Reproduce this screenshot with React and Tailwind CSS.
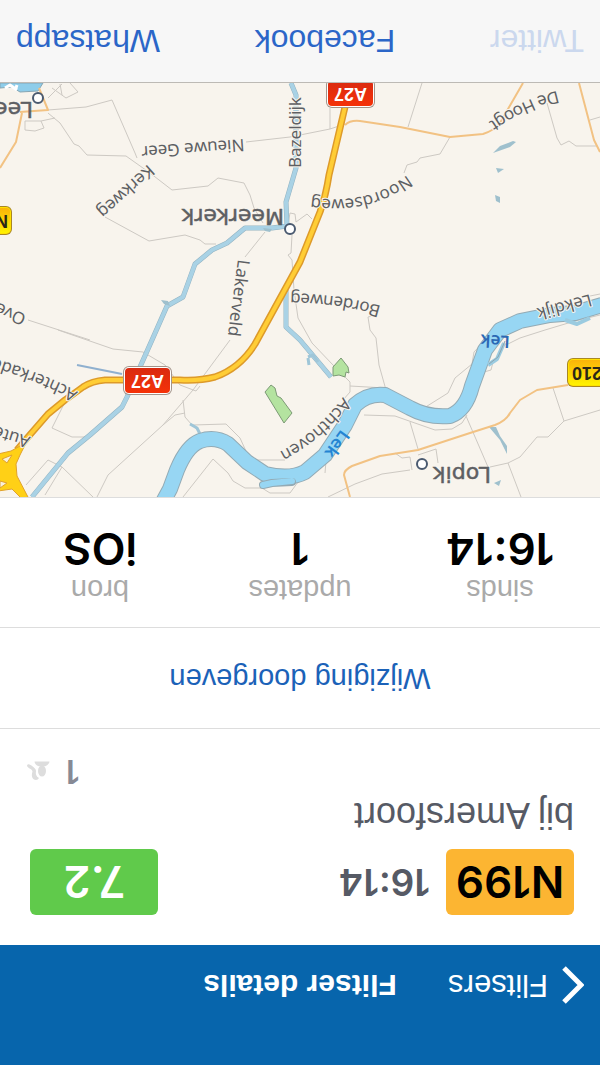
import React from "react";

const STATS = [
  { label: "sinds", value: "16:14" },
  { label: "updates", value: "1" },
  { label: "bron", value: "iOS" },
];

const SHARE_OPTIONS = [
  { name: "Twitter", disabled: true },
  { name: "Facebook", disabled: false },
  { name: "Whatsapp", disabled: false },
];

// Thin grey local roads
const LOCAL_ROADS = [
  "M48 110L86 107L112 100L135 153L137 158",
  "M48 113L60 123L74 144L79 146L87 155L126 156L150 173L172 190L208 186L218 178L244 183L250 195L254 208L263 223",
  "M48 98L62 84M70 83L78 92L66 98L52 88M60 84L62 95",
  "M25 121L41 121L44 128L35 131L25 130ZM41 121L55 118",
  "M246 142L290 137L330 129L345 124",
  "M330 108L330 129M422 83L408 127",
  "M450 137L440 154L420 158L417 162L407 165L404 173",
  "M547 103L557 138L561 145L569 141L576 146L597 146M590 120L600 117",
  "M105 217L149 241L185 235L200 240L205 244L216 244",
  "M265 232L245 257M230 340L193 390L163 425L108 475L97 497",
  "M292 235L291 253L288 255L292 260L294 290L298 318L312 343L333 365L350 382L350 392L343 400",
  "M288 224L290 213L295 214L296 222L307 214L312 219",
  "M28 320L90 340M58 330L113 349L143 352L165 365L180 385L196 391L200 386",
  "M183 400L185 417L192 425L200 432M163 425L175 415L185 413",
  "M65 402L52 428L72 437L85 437",
  "M26 485L48 460L62 467L93 497M62 467L45 495",
  "M193 425L226 424L240 438L250 460L285 460",
  "M183 497L213 459L228 473L233 481L245 488L262 488L270 493L290 493L298 482",
  "M370 330L376 338L379 365L386 390M350 386L385 388",
  "M368 317L370 330M376 315L368 317",
  "M424 408L448 393L455 378L472 364L474 352L490 335",
  "M364 415L395 416L412 422L435 430L452 429L462 423L467 415",
  "M410 422L418 449M466 416L488 467",
  "M506 345L520 338L545 330L575 321L600 315",
  "M328 497L355 484L382 474L410 470",
  "M490 467L508 463L520 457L537 437L548 437L564 421L600 410M564 421L553 388M508 463L521 497",
  "M395 453L402 458L410 457L412 470M418 455L436 449L438 463M325 473L326 461",
  "M590 296L600 294M484 372L491 370L493 362",
];

// Orange secondary roads
const SECONDARY_ROADS = [
  "M345 125Q350 120 360 121L400 127L450 137L483 134Q495 130 500 123L523 83",
  "M579 83L594 140L600 152",
  "M20 112L48 110L39 88M22 113L16 142L0 168",
  "M350 497L344 475Q344 470 352 466L380 456L418 450L470 433L495 425Q506 421 510 413L520 400L537 390L568 385",
];

// Canals and brooks
const CANALS = [
  "M291 83L296 95L296 168L286 202L287 226L272 228L245 228L227 243L212 250L195 264L183 297L167 306L152 340L140 367L127 397L122 407L90 435L68 453L32 497",
  "M286 290L286 327L300 340L331 377",
];

const RIVER =
  "M163 502L170 489L177 470Q187 446 200 441Q215 436 228 444L247 462L265 474Q290 480 305 472L325 455L345 425L355 405Q368 393 385 395L410 408Q428 418 450 416Q466 410 472 386L485 350L500 330L520 321L550 315L575 313L602 305";

const MOTORWAY =
  "M354 83L345 107L329 175Q326 195 320 212L300 262L255 344Q240 368 215 377Q200 381 180 380L105 380Q92 381 83 387L65 400L48 414L28 437L17 450";

const ROAD_LABELS = [
  { id: "nieuwe-geer", text: "Nieuwe Geer", d: "M244 139L120 148" },
  { id: "kerkweg", text: "Kerkweg", d: "M148 164L88 218" },
  { id: "bazeldijk", text: "Bazeldijk", d: "M301 168L301 85" },
  { id: "de-hoogt", text: "De Hoogt", d: "M557 91Q518 99 474 133" },
  { id: "noordseweg", text: "Noordseweg", d: "M407 175C385 191 355 208 293 194" },
  { id: "bordenweg", text: "Bordenweg", d: "M381 306Q335 292 270 293" },
  { id: "lakerveld", text: "Lakerveld", d: "M238 259L226 350" },
  { id: "over", text: "Over", d: "M27 315L-30 290" },
  { id: "achterkade", text: "Achterkade", d: "M78 392Q40 370 -40 348" },
  { id: "autena", text: "Autena", d: "M31 437L-40 415" },
  { id: "achthoven", text: "Achthoven", d: "M343 397Q313 438 268 457" },
  { id: "lekdijk", text: "Lekdijk", d: "M590 294L520 313" },
];

const RoadSign = ({ x, y, width, text, textX, motorway }) => (
  <g>
    <rect x={x} y={y} width={width} height="29" rx="6" fill={motorway ? "#a3948a" : "#a98724"} />
    <rect x={x + 1} y={y + 1} width={width - 2} height="27" rx="5" fill={motorway ? "#ffffff" : "#ffe100"} />
    <rect
      x={x + 2}
      y={y + 2}
      width={width - 4}
      height="25"
      rx="4"
      fill={motorway ? "url(#sign-red)" : "url(#sign-yellow)"}
    />
    <text
      transform={`translate(${textX} ${y + 9}) rotate(180)`}
      fontSize="18"
      fontWeight="700"
      fill={motorway ? "#ffffff" : "#2b2718"}
      className="font-['Liberation_Sans',sans-serif]"
    >
      {text}
    </text>
  </g>
);

const TownDot = ({ x, y }) => (
  <circle cx={x} cy={y} r="5" fill="#ffffff" stroke="#4a5a70" strokeWidth="2" />
);

// The map data has south at the top, so the whole drawing is turned once
const MapView = () => (
  <svg
    viewBox="0 83 600 414"
    className="block w-full bg-[#f8f4ed] font-['Noto_Sans',sans-serif]"
    role="img"
    aria-label="Kaart"
  >
    <defs>
      <linearGradient id="sign-red" x1="0" y1="0" x2="0" y2="1">
        <stop offset="0" stopColor="#d92a10" />
        <stop offset="1" stopColor="#f53208" />
      </linearGradient>
      <linearGradient id="sign-yellow" x1="0" y1="0" x2="0" y2="1">
        <stop offset="0" stopColor="#fbb30a" />
        <stop offset="1" stopColor="#fff200" />
      </linearGradient>
    </defs>

    <g transform="rotate(180 300 290)" fill="none" strokeLinejoin="round">
      {LOCAL_ROADS.map((d) => (
        <path key={d} d={d} stroke="#cdc9c3" strokeWidth="1" />
      ))}

      {/* Parks */}
      <g fill="#b4e3a0" stroke="#7d9a76" strokeWidth="1">
        <path d="M265 392L271 385L275 388L277 396L281 398L292 413L284 423Z" />
        <path d="M333 367L341 358L348 367L349 373L346 372L345 377L339 375L333 376Z" />
      </g>

      {/* Water */}
      {CANALS.map((d) => (
        <g key={d}>
          <path d={d} stroke="#93b3c2" strokeWidth="5" />
          <path d={d} stroke="#a9d2e5" strokeWidth="4" />
        </g>
      ))}
      <path d="M77 365L122 374" stroke="#8fb0cf" strokeWidth="2" />
      <path d="M190 424L197 428L201 436M308 357L313 355L318 362M309 365L308 358" stroke="#9fc6d8" strokeWidth="3" />
      <path d={RIVER} stroke="#93aab4" strokeWidth="16" />
      <path d={RIVER} stroke="#97d6f3" strokeWidth="14" />
      <path d="M263 485L272 483L292 482" stroke="#93aab4" strokeWidth="8" strokeLinecap="round" />
      <path d="M263 485L272 483L292 481" stroke="#97d6f3" strokeWidth="6" strokeLinecap="round" />
      <path d="M504 343L497 359L488 365M565 320L577 324L590 318" stroke="#9bcbe0" strokeWidth="4" />
      <path d="M505 341L498 357L489 364" stroke="#8ba6b2" strokeWidth="1" />
      <g fill="#9fc0cd">
        <path d="M493 153L500 146L513 141L516 142L510 147Z" />
        <path d="M496 168L504 169L498 173Z" />
        <path d="M495 195L500 197L500 203L496 201Z" />
        <path d="M489 427L496 427L500 436L507 446L507 454L500 440Z" />
        <path d="M494 483L501 480L499 486Z" />
        <path d="M161 300L168 301L170 306L164 304Z" />
        <path d="M263 228L272 229L270 232L265 231Z" />
      </g>
      <path d="M0 83L43 83L38 91L20 92L12 87L0 88Z" fill="#8ecdea" stroke="#86a6b4" />
      <path d="M5 88L10 85L17 90M16 88L17 85" stroke="#ffffff" strokeWidth="3" />

      {SECONDARY_ROADS.map((d) => (
        <path key={d} d={d} stroke="#f2c283" strokeWidth="2" />
      ))}

      {/* Motorway A27 with its junction */}
      <path d={MOTORWAY} stroke="#dd9a2a" strokeWidth="7" />
      <path d={MOTORWAY} stroke="#ffcd35" strokeWidth="4" />
      <path
        d="M20 446L11 451L-2 454L-2 491L12 489L22 499L29 499L17 476L16 464L20 455L25 445Z"
        fill="#ffd016"
        stroke="#e0a22c"
      />
      <path d="M2 459L12 455L7 463ZM0 481L7 483L0 488Z" fill="#f8f0dc" stroke="#e0a22c" />

      {/* Road names */}
      {ROAD_LABELS.map(({ id, text, d }) => (
        <g key={id}>
          <path id={id} d={d} />
          <text
            fontSize="17"
            fill="#5d5f63"
            stroke="#f8f4ed"
            strokeWidth="2"
            style={{ paintOrder: "stroke" }}
          >
            <textPath href={`#${id}`}>{text}</textPath>
          </text>
        </g>
      ))}

      <g fontSize="17" fontWeight="600">
        <text transform="translate(510 336) rotate(183)" fill="#2b68b4">
          Lek
        </text>
        <text transform="translate(341 429) rotate(126)" fill="#2484d2">
          Lek
        </text>
      </g>

      {/* Towns */}
      <g
        fontSize="22"
        fill="#5d5f63"
        stroke="#5d5f63"
        strokeWidth="0.5"
        className="font-['DejaVu_Sans',sans-serif]"
      >
        <text transform="translate(491 467) rotate(180)">Lopik</text>
        <text transform="translate(284 209) rotate(180)">Meerkerk</text>
        <text transform="translate(33 102) rotate(180)">Leerdam</text>
      </g>
      <TownDot x={422} y={464} />
      <TownDot x={290} y={229} />
      <TownDot x={38} y={98} />

      <RoadSign x={326} y={79} width={49} text="A27" textX={367} motorway />
      <RoadSign x={123} y={366} width={49} text="A27" textX={164} motorway />
      <RoadSign x={-44} y={206} width={56} text="N214" textX={8} />
      <RoadSign x={567} y={358} width={56} text="N210" textX={615} />
    </g>
  </svg>
);

const UsersIcon = () => (
  <svg viewBox="0 0 24 20" className="h-5 w-6 fill-[#dddddd]" aria-hidden="true">
    <ellipse cx="8" cy="10" rx="4" ry="5.5" />
    <path d="M0.500 19.500C0.500 17 3.500 15 6 14.500H10C13 15 15.500 17 15.500 19.500Z" />
    <path d="M11 3C12 1 14 0.500 16 1.500C18.500 3 18.500 6.500 17.500 9.500C17.500 12 22 12.500 23 15C23 17 21 17 19.500 16C17 14.500 14 12.500 14 10C14.500 7 14 4.500 11 3Z" />
  </svg>
);

const Header = () => (
  <header className="grid h-[120px] grid-cols-[1fr_auto_1fr] items-center bg-[#0765ac] pt-10 text-white">
    <button type="button" className="flex items-center gap-3 pl-4 text-[31px] leading-10">
      <svg viewBox="0 0 24 38" className="h-[38px] w-6" fill="none" aria-hidden="true">
        <path d="M20 2L3 19L20 36" stroke="currentColor" strokeWidth="5" />
      </svg>
      Flitsers
    </button>
    <h1 className="text-[30px] leading-10 font-bold">Flitser details</h1>
  </header>
);

const Summary = () => (
  <section className="border-b border-[#dddddd] px-[26px] pt-[30px] pb-5">
    <div className="flex items-center font-['Inter',sans-serif]">
      <span className="flex h-[66px] w-32 items-center justify-center rounded-md bg-[#fcb532] text-[44px] font-semibold text-black">
        N199
      </span>
      <time className="ml-4 text-[37px] font-semibold text-[#565a65]">16:14</time>
      <span className="mr-1 ml-auto flex h-[66px] w-32 items-center justify-center rounded-md bg-[#60ca4b] text-[44px] font-semibold text-white">
        7.2
      </span>
    </div>
    <p className="mt-3 text-[36px] leading-[44px] text-[#565a65]">bij Amersfoort</p>
    <div className="flex items-center justify-end gap-4 font-['Inter',sans-serif] text-[32px] leading-[44px] font-semibold text-[#878a95]">
      1
      <UsersIcon />
    </div>
  </section>
);

const App = () => {
  return (
    <div className="flex min-h-screen w-full rotate-180 flex-col bg-white font-['Liberation_Sans',Arial,sans-serif]">
      <Header />
      <main className="grow">
        <Summary />

        <button
          type="button"
          className="block h-[101px] w-full border-b border-[#dddddd] text-[29px] text-[#1b62b8]"
        >
          Wijziging doorgeven
        </button>

        <dl className="grid grid-cols-3 border-b border-[#dddddd] pt-5 pb-[27px] text-center">
          {STATS.map(({ label, value }) => (
            <div key={label}>
              <dt className="text-[29px] leading-[34px] text-[#aaaaaa]">{label}</dt>
              <dd className="font-['Inter',sans-serif] text-[44px] leading-[48px] font-semibold text-black">
                {value}
              </dd>
            </div>
          ))}
        </dl>

        <MapView />
      </main>

      <footer className="flex h-[83px] items-center justify-between border-t border-[#bdbab5] bg-[#f7f7f7] px-4 text-[32px]">
        {SHARE_OPTIONS.map(({ name, disabled }) => (
          <button
            key={name}
            type="button"
            disabled={disabled}
            className="text-[#2b66c8] disabled:text-[#cbd8ee]"
          >
            {name}
          </button>
        ))}
      </footer>
    </div>
  );
};

export default App;
